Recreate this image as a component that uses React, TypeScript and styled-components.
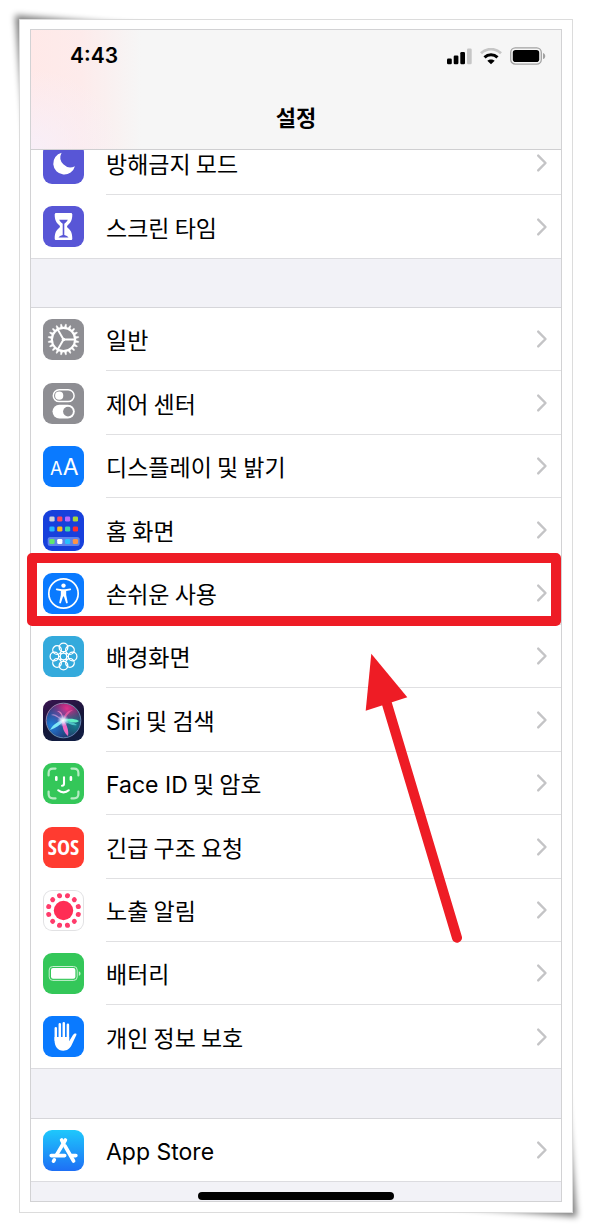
import React from "react";
import styled, { createGlobalStyle } from "styled-components";

const GlobalStyle = createGlobalStyle`
  *, *::before, *::after { box-sizing: border-box; }
  body {
    margin: 0;
    background: #fff;
    color: #000;
    font-family: Inter, "Noto Sans CJK KR", sans-serif;
  }
`;

const Page = styled.div`
  position: relative;
  z-index: 0;
  padding: 19px;
`;

const CornerShadow = styled.svg<{ $corner: "start" | "end" }>`
  position: absolute;
  z-index: -1;
  width: 240px;
  height: 240px;
  ${(p) => (p.$corner === "start" ? "top: 0; left: 0;" : "right: 0; bottom: 0; transform: rotate(180deg);")}
`;

const Frame = styled.div`
  padding: 9px 10px 10px;
  border: 1px solid #dcdcdc;
  background: #fff;
`;

const Screen = styled.div`
  border: 1px solid #d2d2d4;
  background: #f2f2f7;
`;

const Header = styled.header`
  position: relative;
  z-index: 1;
  display: flex;
  flex-direction: column;
  height: 120px;
  border-bottom: 1px solid #cfcfd1;
  background:
    radial-gradient(90px 80px at 0 100%, rgba(246, 240, 252, 0.8), rgba(246, 240, 252, 0)),
    linear-gradient(to right, #ffe9e8, #fdebeb 50px, #f6f6f6 110px);
`;

const StatusBar = styled.div`
  display: flex;
  align-items: center;
  gap: 8px;
  padding: 12px 15px 0 39px;
`;

const Time = styled.time`
  margin-right: auto;
  font-size: 21px;
  font-weight: 600;
  line-height: 28px;
`;

const Title = styled.h1`
  margin: 30px 0 0;
  text-align: center;
  font-size: 22px;
  font-weight: 600;
  line-height: 36px;
`;

const Group = styled.ul<{ $scrolled?: boolean }>`
  margin: ${(p) => (p.$scrolled ? "-18px" : "48px")} 0 0;
  padding: 0;
  border-top: ${(p) => (p.$scrolled ? "0" : "1px solid #d6d6da")};
  list-style: none;
  background: #fff;

  & + & + & {
    margin-top: 49px;
  }
`;

const Item = styled.li`
  position: relative;
  display: flex;
  min-height: 63px;

  &:nth-child(5n + 2),
  &:nth-child(5n + 4) {
    min-height: 64px;
  }

  &:last-child {
    border-bottom: 1px solid #dcdce0;
  }
`;

const RowLink = styled.a`
  display: flex;
  flex: 1;
  align-items: stretch;
  gap: 22px;
  padding-left: 12px;
  color: inherit;
  text-decoration: none;
`;

const RowBody = styled.span`
  display: flex;
  flex: 1;
  align-items: center;
  justify-content: space-between;
  padding-right: 13px;
  border-bottom: 1px solid #e0e0e2;

  ${Item}:last-child & {
    border-bottom: 0;
  }
`;

const Label = styled.span`
  font-family: "Noto Sans CJK KR", sans-serif;
  font-size: 23px;
  line-height: 32px;
`;

const Latin = styled.span`
  font-family: Inter, sans-serif;
  line-height: 1;
`;

const Tile = styled.span<{ $bg: string; $outlined?: boolean }>`
  display: block;
  flex: none;
  align-self: center;
  width: 41px;
  height: 41px;
  border-radius: 9px;
  overflow: hidden;
  background: ${(p) => p.$bg};
  box-shadow: ${(p) => (p.$outlined ? "inset 0 0 0 1px #e2e2e4" : "none")};

  svg {
    display: block;
  }
`;

const Highlight = styled.span`
  position: absolute;
  z-index: 1;
  top: -9px;
  right: 0;
  bottom: -1px;
  left: -4px;
  border: 10px solid #ee1c25;
  border-radius: 5px;
  pointer-events: none;
`;

const Arrow = styled.svg`
  position: absolute;
  z-index: 1;
  top: 88px;
  right: 96px;
  pointer-events: none;
`;

const HomeArea = styled.footer`
  display: flex;
  justify-content: center;
  padding: 10px 0 1px;
`;

const HomeBar = styled.span`
  width: 37%;
  height: 8px;
  border-radius: 4px;
  background: #000;
`;

const Glyph = ({ children }: { children: React.ReactNode }) => (
  <svg width="41" height="41" viewBox="0 0 41 41" fill="none" aria-hidden="true">
    {children}
  </svg>
);

const spin = (count: number, offset = 0) =>
  Array.from({ length: count }, (_, i) => `rotate(${offset + (i * 360) / count} 20.5 20.5)`);

const MoonGlyph = () => (
  <Glyph>
    <path d="M18.6 9.8A11 11 0 1 0 31.9 23.2A9.9 9.9 0 0 1 18.6 9.8Z" fill="#fff" />
  </Glyph>
);

const HourglassGlyph = () => (
  <Glyph>
    <path
      d="M13.2 7h14.6c1 0 1.500.7 1.500 1.600 0 5.600-1.600 8.200-4.600 10.600-.9.800-.9 1.800 0 2.600 3 2.400 4.600 5 4.600 10.600 0 .9-.5 1.600-1.500 1.600H13.200c-1 0-1.500-.7-1.500-1.600 0-5.600 1.600-8.200 4.600-10.600.9-.8.9-1.800 0-2.600-3-2.400-4.600-5-4.600-10.600C11.700 7.700 12.200 7 13.200 7Z"
      fill="#fff"
    />
    <path d="M16.200 13.800h8.600c-.6 1.500-1.700 2.700-3.500 3.900v11.300c1.900.5 3.500 1.400 4.200 2.500h-10c.7-1.100 2.300-2 4.200-2.500V17.700c-1.800-1.200-2.900-2.400-3.500-3.900Z" fill="#5856d6" />
  </Glyph>
);

const GearGlyph = () => (
  <Glyph>
    <circle cx="20.5" cy="20.5" r="11.600" stroke="#fff" strokeWidth="2.100" />
    {spin(20, 9).map((t) => (
      <path key={t} d="M19.400 8.500L20 5.100h1L21.600 8.500Z" fill="#fff" stroke="#fff" strokeWidth=".4" transform={t} />
    ))}
    {spin(3, 90).map((t) => (
      <path key={t} d="M20.500 20.500V9" stroke="#fff" strokeWidth="1.900" transform={t} />
    ))}
    <circle cx="20.5" cy="20.5" r="1.800" fill="#fff" />
  </Glyph>
);

const TogglesGlyph = () => (
  <Glyph>
    <rect x="10.300" y="6.800" width="20.800" height="11.800" rx="5.900" stroke="#fff" strokeWidth="1.500" />
    <circle cx="16.200" cy="12.700" r="4.100" fill="#fff" />
    <rect x="9.500" y="21.700" width="22.300" height="13.800" rx="6.900" fill="#fff" />
    <circle cx="25" cy="28.600" r="4.900" fill="#8e8e93" />
  </Glyph>
);

const LetterGlyph = () => (
  <Glyph>
    <g fill="#fff" fontFamily="Inter, sans-serif" fontWeight="400" textAnchor="middle">
      <text x="13.200" y="29.300" fontSize="18">A</text>
      <text x="27.700" y="29.300" fontSize="23">A</text>
    </g>
  </Glyph>
);

const appRows = [
  { y: 9, colors: ["#cfd3dc", "#ff4a5c", "#b86bff", "#a8d53b"] },
  { y: 19, colors: ["#27b7ff", "#ffb81a", "#3bd6a8", "#ff2f32"] },
  { y: 31.5, colors: ["#5fe86f", "#ffffff", "#27c1ff", "#ff9345"] },
];

const HomeGlyph = () => (
  <Glyph>
    <rect x="4.700" y="27" width="32" height="9" rx="2.500" fill="#5f83ea" />
    {appRows.map((row) =>
      row.colors.map((color, i) => (
        <rect key={color} x={6.4 + i * 7.8} y={row.y - 2.6} width="5.200" height="5.200" rx="1.400" fill={color} />
      )),
    )}
  </Glyph>
);

const PersonGlyph = () => (
  <Glyph>
    <circle cx="20.5" cy="20.5" r="14.700" stroke="#fff" strokeWidth="1.700" />
    <circle cx="20.500" cy="12.600" r="2.200" fill="#fff" />
    <path
      d="M13.800 15.600l5.200.6h3l5.200-.6c1.200-.1 1.300 1.400.2 1.600l-4.200.9v3.800l1.500 7.400c.3 1.200-1.300 1.600-1.700.4l-2.100-6.300h-.8l-2.100 6.300c-.4 1.200-2 .8-1.700-.4l1.500-7.400v-3.800l-4.200-.9c-1.100-.2-1-1.700.2-1.600Z"
      fill="#fff"
    />
  </Glyph>
);

const FlowerGlyph = () => (
  <Glyph>
    {spin(8).map((t) => (
      <circle key={t} cx="20.500" cy="11.400" r="4.300" stroke="#fff" strokeWidth="1.300" transform={t} />
    ))}
    <circle cx="20.500" cy="20.500" r="3.300" stroke="#fff" strokeWidth="1.300" />
    {spin(8).map((t) => (
      <path key={t} d="M20.500 17.200v-2" stroke="#fff" strokeWidth="1" transform={t} />
    ))}
  </Glyph>
);

const SiriGlyph = () => (
  <Glyph>
    <defs>
      <radialGradient id="siri-pink" cx=".6" cy=".15" r=".6">
        <stop offset="0" stopColor="#e0308c" />
        <stop offset="1" stopColor="#e0308c" stopOpacity="0" />
      </radialGradient>
      <radialGradient id="siri-blue" cx=".15" cy=".65" r=".65">
        <stop offset="0" stopColor="#2180dd" />
        <stop offset="1" stopColor="#2180dd" stopOpacity="0" />
      </radialGradient>
      <radialGradient id="siri-teal" cx=".85" cy=".65" r=".5">
        <stop offset="0" stopColor="#167d8d" />
        <stop offset="1" stopColor="#167d8d" stopOpacity="0" />
      </radialGradient>
      <radialGradient id="siri-core">
        <stop offset="0" stopColor="#fff" />
        <stop offset=".4" stopColor="#e4ecff" stopOpacity=".8" />
        <stop offset="1" stopColor="#b7c9ff" stopOpacity="0" />
      </radialGradient>
      <linearGradient id="siri-ring" x1="0" y1="0" x2="1" y2="1">
        <stop offset="0" stopColor="#b578ae" />
        <stop offset=".5" stopColor="#6c9ab4" />
        <stop offset="1" stopColor="#5f78b8" />
      </linearGradient>
    </defs>
    <circle cx="20.500" cy="20.500" r="17" fill="#24225a" />
    <circle cx="20.500" cy="20.500" r="17" fill="url(#siri-pink)" />
    <circle cx="20.500" cy="20.500" r="17" fill="url(#siri-blue)" />
    <circle cx="20.500" cy="20.500" r="17" fill="url(#siri-teal)" />
    <circle cx="20.500" cy="20.500" r="17.300" stroke="url(#siri-ring)" strokeWidth="1" />
    <path d="M20 21C15 15 11 13 8 15c3 0 8 3 12 6Z" fill="#d7a0dd" opacity=".7" />
    <path d="M20 20c0-7-2-9-6-9 4 2 5 5 6 9Z" fill="#f58fc6" opacity=".8" />
    <path d="M20 20c1-6 5-10 10-10-4 2-7 6-9 11Z" fill="#f05aa4" opacity=".8" />
    <path d="M20 19c6 0 11-1 16 2-3 3-9 1-16 0Z" fill="#61f0c5" />
    <path d="M20 20c-4 1-10 4-13 10 6-2 10-5 14-9Z" fill="#7ee9f7" />
    <path d="M19 21c0 6 2 12 6 15 1-5-1-11-4-15Z" fill="#f06ac4" />
    <path d="M21 21c5 3 9 5 13 4-4-3-8-4-13-4Z" fill="#4bbfc4" />
    <circle cx="20" cy="20.500" r="6" fill="url(#siri-core)" />
  </Glyph>
);

const FaceGlyph = () => (
  <Glyph>
    <g stroke="#b6ecc3" strokeWidth="2.200" strokeLinecap="round">
      {spin(4).map((t) => (
        <path key={t} d="M5.600 12.500V10c0-3 1.500-4.400 4.400-4.400h2.500" transform={t} />
      ))}
    </g>
    <g stroke="#fff" strokeWidth="2.600" strokeLinecap="round" strokeLinejoin="round">
      <path d="M13.300 14.300v2.500M27.900 14.300v2.500" />
      <path d="M21 14.300v6.500c0 1.300-.6 1.900-2 1.900" strokeWidth="2.100" />
      <path d="M15.300 27.300c3 2.700 7.400 2.700 10.400 0" strokeWidth="2.200" />
    </g>
  </Glyph>
);

const SosGlyph = () => (
  <Glyph>
    <text
      x="20.500"
      y="28"
      fontSize="22"
      fontWeight="700"
      fontFamily='"Liberation Sans Narrow", "Open Sans Condensed", "DejaVu Sans Condensed", sans-serif'
      textAnchor="middle"
      fill="#fff"
    >
      SOS
    </text>
  </Glyph>
);

const ExposureGlyph = () => (
  <Glyph>
    <circle cx="20.500" cy="20.500" r="9.700" fill="#ff2d55" />
    {spin(12, 15).map((t) => (
      <circle key={t} cx="20.500" cy="5.200" r="2.500" fill="#ff3b6b" transform={t} />
    ))}
  </Glyph>
);

const BatteryGlyph = () => (
  <Glyph>
    <rect x="6.200" y="13.500" width="28" height="13.900" rx="3.500" stroke="#c5f0cf" strokeWidth="1" />
    <rect x="8" y="15.100" width="24.400" height="10.700" rx="2" fill="#fff" />
    <path d="M35.800 18.200c2.300.8 2.300 3.800 0 4.600Z" fill="#c5f0cf" />
  </Glyph>
);

const HandGlyph = () => (
  <Glyph>
    <g stroke="#fff" strokeWidth="2.500" strokeLinecap="round">
      <path d="M12.800 12.300v12M16.800 8.200v14M20.800 7.300v14M24.900 8.700v15" />
    </g>
    <path
      d="M11.550 21h14.600v4.200l3.800-6.100c.8-1.300 1.800-1.900 3-1.500.6.200.7.700.4 1.300l-4.700 10.200c-2 4-4.600 5.600-8.400 5.600-5.600 0-8.700-4-8.700-10.700Z"
      fill="#fff"
    />
  </Glyph>
);

const AppStoreGlyph = () => (
  <Glyph>
    <g stroke="#fff" strokeWidth="3.600" strokeLinecap="round">
      <path d="M22.400 10l-9 15.200" />
      <path d="M18.600 10l2 3.500M22 16l8.600 15" />
      <path d="M8.200 25.600h13.500M28.500 25.600h4.400" />
      <path d="M11.300 29.800l-.8 1.300" />
    </g>
  </Glyph>
);

type RowData = {
  label: string;
  latin?: string;
  bg: string;
  icon: React.ReactNode;
  outlined?: boolean;
  highlighted?: boolean;
};

const focusRows: RowData[] = [
  { label: "방해금지 모드", bg: "#5856d6", icon: <MoonGlyph /> },
  { label: "스크린 타임", bg: "#5856d6", icon: <HourglassGlyph /> },
];

const generalRows: RowData[] = [
  { label: "일반", bg: "#8e8e93", icon: <GearGlyph /> },
  { label: "제어 센터", bg: "#8e8e93", icon: <TogglesGlyph /> },
  { label: "디스플레이 및 밝기", bg: "#0a7aff", icon: <LetterGlyph /> },
  { label: "홈 화면", bg: "#1740dc", icon: <HomeGlyph /> },
  { label: "손쉬운 사용", bg: "#0a7aff", icon: <PersonGlyph />, highlighted: true },
  { label: "배경화면", bg: "#34aadc", icon: <FlowerGlyph /> },
  {
    latin: "Siri",
    label: " 및 검색",
    bg: "linear-gradient(160deg, #3a1450, #151638 50%, #101f45)",
    icon: <SiriGlyph />,
  },
  { latin: "Face ID", label: " 및 암호", bg: "#34c759", icon: <FaceGlyph /> },
  { label: "긴급 구조 요청", bg: "#ff3b30", icon: <SosGlyph /> },
  { label: "노출 알림", bg: "#fff", icon: <ExposureGlyph />, outlined: true },
  { label: "배터리", bg: "#34c759", icon: <BatteryGlyph /> },
  { label: "개인 정보 보호", bg: "#0a7aff", icon: <HandGlyph /> },
];

const storeRows: RowData[] = [
  { latin: "App Store", label: "", bg: "linear-gradient(#1ec8fc, #1e6ff5)", icon: <AppStoreGlyph /> },
];

const Chevron = () => (
  <svg width="12" height="20" viewBox="0 0 12 20" fill="none" aria-hidden="true">
    <path d="M2.200 2.600L9.500 10l-7.300 7.400" stroke="#c4c4c6" strokeWidth="2.400" strokeLinecap="round" strokeLinejoin="round" />
  </svg>
);

const Row = ({ label, latin, bg, icon, outlined, highlighted }: RowData) => (
  <Item>
    <RowLink href="#">
      <Tile $bg={bg} $outlined={outlined}>{icon}</Tile>
      <RowBody>
        <Label>
          {latin && <Latin>{latin}</Latin>}
          {label}
        </Label>
        <Chevron />
      </RowBody>
    </RowLink>
    {highlighted && (
      <>
        <Highlight />
        <Arrow width="105" height="295" viewBox="0 0 105 295" aria-hidden="true">
          <path d="M26.700 53L97 287.700" stroke="#ee1c25" strokeWidth="10" strokeLinecap="round" />
          <path d="M11.300 3.700L5.700 60.700L47.300 47.300Z" fill="#ee1c25" />
        </Arrow>
      </>
    )}
  </Item>
);

const StatusIcons = () => (
  <>
    <svg width="25" height="17" viewBox="0 0 25 17" role="img" aria-label="Signal">
      <rect x="0" y="10.600" width="4.800" height="5.600" rx="1.200" />
      <rect x="6.700" y="7.600" width="4.700" height="8.600" rx="1.200" />
      <rect x="13.300" y="4" width="4.700" height="12.200" rx="1.200" />
      <rect x="20" y=".6" width="4.700" height="15.600" rx="1.200" fill="#c6c6c6" />
    </svg>
    <svg width="22" height="17" viewBox="0 0 22 17" fill="none" role="img" aria-label="Wi-Fi">
      <path d="M1 5.300C6.700-.2 15.300-.2 21 5.300" stroke="#c6c6c6" strokeWidth="2.800" />
      <path d="M4.500 9.400c3.700-3.500 9.300-3.500 13 0" stroke="#000" strokeWidth="3" />
      <path d="M11 16.300l-3.700-3.500c2.100-1.900 5.300-1.900 7.400 0Z" fill="#000" />
    </svg>
    <svg width="36" height="18" viewBox="0 0 36 18" fill="none" role="img" aria-label="Battery">
      <rect x=".7" y=".9" width="30.600" height="16.200" rx="4.600" stroke="#a2a2a2" strokeWidth="1.300" />
      <rect x="2.800" y="3" width="26.400" height="12" rx="2.800" fill="#000" />
      <path d="M33 5.900c3 1 3 5.200 0 6.200Z" fill="#a2a2a2" />
    </svg>
  </>
);

const Shadow = ({ corner }: { corner: "start" | "end" }) => (
  <CornerShadow $corner={corner} viewBox="0 0 240 240" aria-hidden="true">
    <defs>
      <filter id={`soften-${corner}`} x="-10%" y="-10%" width="120%" height="120%">
        <feGaussianBlur stdDeviation="3" />
      </filter>
    </defs>
    <path d="M15 15L160 27V160H27Z" fill="#000" opacity=".5" filter={`url(#soften-${corner})`} />
  </CornerShadow>
);

export default function App() {
  return (
    <>
      <GlobalStyle />
      <Page>
        <Shadow corner="start" />
        <Shadow corner="end" />
        <Frame>
          <Screen>
            <Header>
              <StatusBar>
                <Time>4:43</Time>
                <StatusIcons />
              </StatusBar>
              <Title>설정</Title>
            </Header>
            <main>
              <Group $scrolled>{focusRows.map((r) => <Row key={r.label} {...r} />)}</Group>
              <Group>{generalRows.map((r) => <Row key={r.label} {...r} />)}</Group>
              <Group>{storeRows.map((r) => <Row key={r.label} {...r} />)}</Group>
            </main>
            <HomeArea>
              <HomeBar />
            </HomeArea>
          </Screen>
        </Frame>
      </Page>
    </>
  );
}
